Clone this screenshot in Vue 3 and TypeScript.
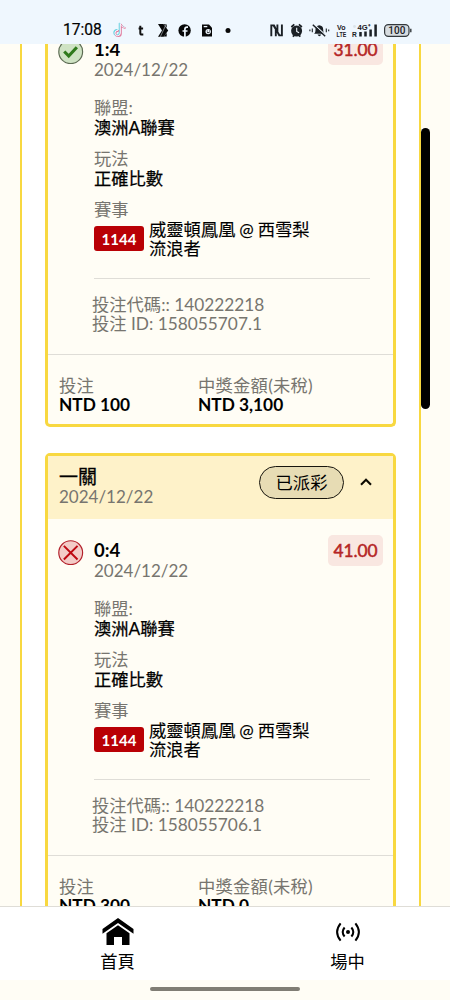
<script setup lang="ts">
interface Bet {
  id: string
  title?: string
  pick: string
  won: boolean
  odds: string
  code: string
  betId: string
  stake: string
  payout: string
}

const date = '2024/12/22'

const bets: Bet[] = [
  { id: 'a', pick: '1:4', won: true, odds: '31.00', code: '140222218', betId: '158055707.1', stake: 'NTD 100', payout: 'NTD 3,100' },
  { id: 'b', title: '一關', pick: '0:4', won: false, odds: '41.00', code: '140222218', betId: '158055706.1', stake: 'NTD 300', payout: 'NTD 0' },
]
</script>

<template>
  <div class="screen">
    <header class="status">
      <span class="time">17:08</span>
      <svg class="apps" width="124" height="20" viewBox="112 20 124 20">
        <g fill="none" stroke-width="1.6" stroke-linecap="round">
          <path d="M120.3 24v9a2.7 2.7 0 1 1-2.7-2.7M120.3 24c.6 2 2.1 3.2 4 3.4" stroke="#6fd3e2" transform="translate(-.8 -.5)" />
          <path d="M120.3 24v9a2.7 2.7 0 1 1-2.7-2.7M120.3 24c.6 2 2.1 3.2 4 3.4" stroke="#e07a9d" transform="translate(.7 .6)" />
          <path d="M120.3 24v9a2.7 2.7 0 1 1-2.7-2.7M120.3 24c.6 2 2.1 3.2 4 3.4" stroke="#f8f8ff" stroke-width="1" />
        </g>
        <path d="M140.3 25.8v7.1q0 1.6 1.7 1.6h1.3M138.6 28.5h4.5" fill="none" stroke="#111" stroke-width="2" />
        <path d="M158 24h5.4l4.8 6.4-4.6 6.4H158l4-6.4z" fill="#080808" />
        <path d="M163.5 24.3h3.2v3.5zM163.5 36.6h3.2v-3.5z" fill="#080808" />
        <path d="M166.3 24l-6 12.8" stroke="#eff7fe" stroke-width=".5" />
        <circle cx="184.6" cy="30.5" r="6.2" fill="#080808" />
        <path d="M184.9 37v-7.7q0-2.1 2.2-2.1h.9M182.5 31h5" fill="none" stroke="#eff7fe" stroke-width="1.7" />
        <path d="M202 24.5h7l3 3.2v8.8h-10z" fill="#080808" />
        <path d="M203.7 26.6h3.6" stroke="#eff7fe" stroke-width="1.3" />
        <circle cx="208.2" cy="31.6" r="2.7" fill="#eff7fe" />
        <path d="M206.8 31h1M209 31h1M207 32.6h2.6" stroke="#080808" stroke-width=".8" />
        <circle cx="228" cy="30.4" r="2.5" fill="#080808" />
      </svg>
      <svg class="system" width="146" height="20" viewBox="268 20 146 20">
        <path d="M271.3 36.3V25.4h2.7l1.8 3.6v7.3M281.9 24.5v10.9h-2.7l-1.8-3.6v-7.3M273.6 25.4l5.9 10" fill="none" stroke="#1b2025" stroke-width="1.9" />
        <circle cx="296.6" cy="31" r="5.5" fill="#1b2025" />
        <path d="M291.3 27l3-2.6M301.9 27l-3-2.6M293 36.8l1-1.5M300.2 36.8l-1-1.5" stroke="#1b2025" stroke-width="1.7" />
        <path d="M296.7 27.8V31.4l2.4 1.4" stroke="#eff7fe" stroke-width="1.1" fill="none" />
        <path d="M314 33.7c1.4-1 1.5-2.3 1.5-4.2 0-2.5 1.4-4 3.8-4.3 2.5.3 3.9 1.8 3.9 4.3 0 1.9.2 3.2 1.6 4.2zM317.5 34.5h3.8q-1.9 3.4-3.8 0z" fill="#1b2025" />
        <path d="M313.9 24.3l12 11.2" stroke="#eff7fe" stroke-width="1.2" />
        <path d="M312.8 24.7l12.4 11.6" stroke="#1b2025" stroke-width="1.5" />
        <path d="M312.3 28.6v3.6M309.9 29.5v1.8M326.3 28.6v3.6M328.7 29.5v1.8" stroke="#1b2025" stroke-width="1.1" />
        <g class="tiny">
          <text x="337" y="29.7" textLength="8.5" lengthAdjust="spacingAndGlyphs">Vo</text>
          <text x="336.6" y="36.7" textLength="9.6" lengthAdjust="spacingAndGlyphs">LTE</text>
          <text x="352" y="36.6" textLength="4.8" lengthAdjust="spacingAndGlyphs">R</text>
          <text x="357.5" y="30" textLength="13" lengthAdjust="spacingAndGlyphs">4G⁺</text>
        </g>
        <circle cx="354.5" cy="26.5" r="1.4" fill="#dce4e9" />
        <path d="M360.5 32v4.5M365.5 31.5v5M370.6 29.5v7M375.6 24.5v12" stroke="#1b2025" stroke-width="2.5" />
        <rect x="384.6" y="24.6" width="24.4" height="11.8" rx="3.8" fill="#d7dce0" stroke="#33383c" stroke-width="1.2" />
        <path d="M410.8 28.8v3.4" stroke="#33383c" stroke-width="1.4" />
        <text class="battery" x="396.8" y="34.2" text-anchor="middle">100</text>
      </svg>
    </header>

    <main class="viewport">
      <div class="panel">
        <article v-for="bet in bets" :key="bet.id" class="card" :class="{ continued: !bet.title }">
          <div v-if="bet.title" class="head">
            <div>
              <div class="title">{{ bet.title }}</div>
              <div class="muted">{{ date }}</div>
            </div>
            <span class="pill">已派彩</span>
            <svg class="chevron" width="14" height="10" viewBox="0 0 14 10">
              <path d="M2 7.8 7 2.8l5 5" fill="none" stroke="#0c0a00" stroke-width="2.1" />
            </svg>
          </div>

          <div class="pick">
            <svg class="mark" width="25.4" height="25.4" viewBox="0 0 26 26">
              <template v-if="bet.won">
                <circle cx="13" cy="13" r="12.2" fill="#cfe3c4" stroke="#5c6b52" stroke-width="1.2" />
                <path d="M6.4 12.8l4.6 4.7 8.3-9" fill="none" stroke="#2f7a1c" stroke-width="3.2" />
              </template>
              <template v-else>
                <circle cx="13" cy="13" r="12.2" fill="#f3cbc7" stroke="#b3202a" stroke-width="1.2" />
                <path d="M6 6l14 14M20 6L6 20" fill="none" stroke="#bd0710" stroke-width="2" />
              </template>
            </svg>
            <div>
              <div class="score">{{ bet.pick }}</div>
              <div class="muted low">{{ date }}</div>
            </div>
            <span class="odds">{{ bet.odds }}</span>
          </div>

          <div class="details">
            <dl>
              <dt>聯盟:</dt>
              <dd>澳洲A聯賽</dd>
              <dt>玩法</dt>
              <dd>正確比數</dd>
              <dt>賽事</dt>
            </dl>
            <div class="match">
              <span class="number">1144</span>
              <span class="teams">威靈頓鳳凰 @ 西雪梨<br />流浪者</span>
            </div>
          </div>

          <div class="codes">
            <div>投注代碼:: {{ bet.code }}</div>
            <div>投注 ID: {{ bet.betId }}</div>
          </div>

          <div class="totals">
            <div>
              <div class="label">投注</div>
              <div class="money">{{ bet.stake }}</div>
            </div>
            <div>
              <div class="label">中獎金額(未稅)</div>
              <div class="money">{{ bet.payout }}</div>
            </div>
          </div>
        </article>
      </div>
      <div class="scrollbar"></div>
    </main>

    <nav class="tabs">
      <a class="tab home">
        <svg width="32" height="28" viewBox="0 0 32 28">
          <path d="M16 0 31.5 11v4.8L16 4.9.5 15.8V11z" />
          <path d="M16 7.3 27.5 15.2V27H20v-8h-8v8H4.5V15.2z" />
        </svg>
        <span>首頁</span>
      </a>
      <a class="tab">
        <svg width="24" height="28" viewBox="0 0 24 28">
          <circle cx="12" cy="14" r="2" />
          <path d="M8.6 9.5q-3.8 4.5 0 9M15.4 9.5q3.8 4.5 0 9M4.6 5.3q-7 8.7 0 17.4M19.4 5.3q7 8.7 0 17.4" fill="none" stroke="#000" stroke-width="2" />
        </svg>
        <span>場中</span>
      </a>
    </nav>
    <div class="gesture"><i></i></div>
  </div>
</template>

<style>
body {
  margin: 0;
}
</style>

<style scoped>
.screen {
  width: 450px;
  height: 1000px;
  display: flex;
  flex-direction: column;
  overflow: hidden;
  background: #fffdf5;
  color: #000;
  font: 17.3px/20px Lato, "Noto Sans CJK TC", sans-serif;
}
.status {
  flex: none;
  height: 44px;
  box-sizing: border-box;
  padding: 20px 36px 0 63px;
  display: flex;
  background: #eff7fe;
}
.time {
  width: 49px;
  font: 400 15.6px/21px Roboto, sans-serif;
  -webkit-text-stroke: 0.2px #000;
}
.system {
  margin-left: auto;
}
.tiny {
  font: bold 8px "Liberation Sans", sans-serif;
  fill: #1b2025;
}
.battery {
  font: 500 10px Roboto, sans-serif;
  fill: #1b2025;
}
.viewport {
  position: relative;
  flex: none;
  height: 862px;
  overflow: hidden;
}
.panel {
  width: 351px;
  margin: 0 0 0 20px;
  padding: 0 23px;
  border: solid #f8d840;
  border-width: 0 2px;
  background: #fff;
}
.card {
  box-sizing: border-box;
  height: 475px;
  margin-bottom: 26px;
  border: 3px solid #f8d840;
  border-radius: 5px;
  background: #fffdf5;
}
.card.continued {
  height: 383px;
  border-top: 0;
  border-radius: 0 0 5px 5px;
}
.head {
  height: 63px;
  box-sizing: border-box;
  padding: 11px 20px 0 11px;
  display: flex;
  background: #fef2c9;
}
.title {
  font-size: 19px;
  line-height: 20px;
  -webkit-text-stroke: 0.3px #000;
}
.muted {
  font-size: 17px;
  color: #77756f;
}
.low {
  padding-top: 1px;
}
.pill {
  width: 83px;
  height: 31px;
  margin: -1px 0 0 auto;
  border: 1px solid #17150d;
  border-radius: 17px;
  background: #e7dcb4;
  text-align: center;
  line-height: 32px;
}
.chevron {
  margin: 10px 0 0 15px;
}
.pick {
  height: 73px;
  box-sizing: border-box;
  padding: 21px 10px 0 10.4px;
  display: flex;
}
.continued .pick {
  height: 47px;
  padding-top: 0;
}
.continued .pick > * {
  position: relative;
  top: -5px;
}
.mark {
  flex: none;
  margin: -0.4px 10.2px 0 0;
}
.score {
  font-size: 18.5px;
  font-weight: 700;
}
.odds {
  width: 55px;
  height: 30.5px;
  margin: -5px 0 0 auto;
  border-radius: 5px;
  background: #f9e7e1;
  color: #b52525;
  -webkit-text-stroke: 0.5px #b52525;
  text-align: center;
  line-height: 31px;
}
.details {
  height: 187px;
  margin: 0 23px 0 46px;
  border-bottom: 1px solid #dfddd7;
}
dl {
  margin: 0;
  padding-top: 7px;
}
dt {
  color: #77756f;
}
dd {
  margin: 0 0 11px;
  -webkit-text-stroke: 0.25px #000;
}
.match {
  display: flex;
}
.number {
  width: 50px;
  height: 25px;
  margin: 6px 5px 0 0;
  border-radius: 3px;
  background: #b90005;
  color: #fff;
  font-size: 15px;
  font-weight: 700;
  line-height: 26px;
  text-align: center;
}
.teams {
  line-height: 19px;
  word-spacing: -0.5px;
  -webkit-text-stroke: 0.15px #000;
}
.codes {
  height: 59px;
  padding: 16px 0 0 44px;
  line-height: 19px;
  color: #77756f;
  border-bottom: 1px solid #dfddd7;
}
.totals {
  display: flex;
  padding: 21px 0 0 11px;
  line-height: 19px;
}
.totals > :first-child {
  width: 139px;
}
.label {
  color: #77756f;
  letter-spacing: 0.25px;
}
.money {
  font-weight: 700;
}
.scrollbar {
  position: absolute;
  top: 84px;
  left: 421px;
  width: 9px;
  height: 281px;
  border-radius: 5px;
  background: #000;
}
.tabs {
  flex: none;
  height: 74px;
  box-sizing: border-box;
  border-top: 1px solid #dfddd7;
  background: #fff;
  display: flex;
  justify-content: space-between;
  padding: 11px 67px 0;
}
.tab {
  width: 71px;
  display: flex;
  flex-direction: column;
  align-items: center;
  gap: 6px;
}
.home {
  margin-left: 15px;
}
.gesture {
  flex: none;
  height: 20px;
  display: flex;
  justify-content: center;
}
.gesture i {
  width: 150px;
  height: 4px;
  margin-top: 7px;
  border-radius: 2px;
  background: #807d74;
}
</style>
